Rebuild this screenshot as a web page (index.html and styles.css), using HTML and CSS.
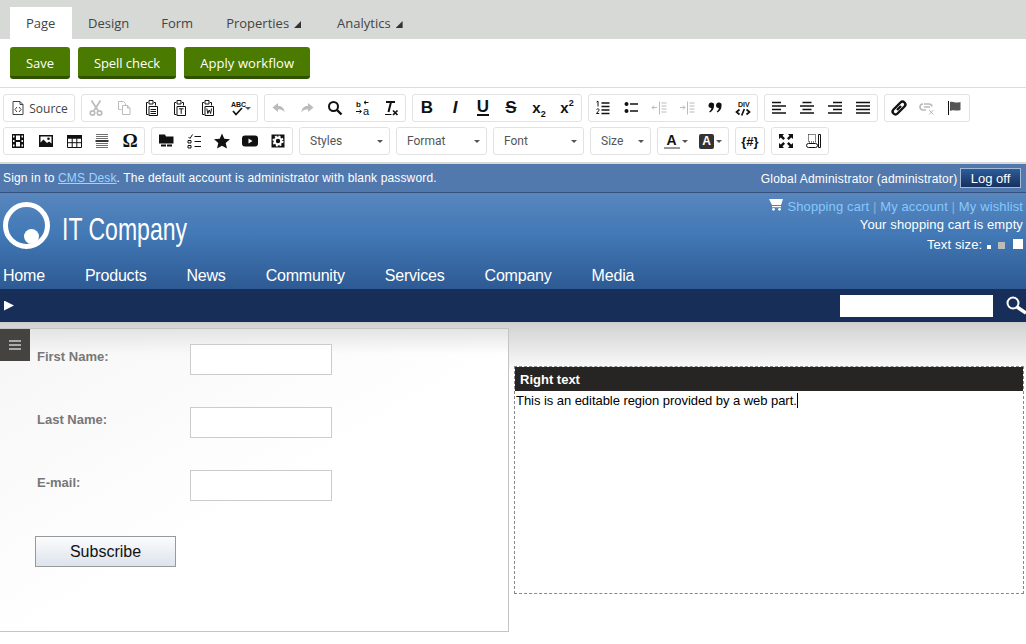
FILE: index.html
```html
<!DOCTYPE html>
<html lang="en">
<head>
    <meta charset="UTF-8">
    <meta name="viewport" content="width=device-width, initial-scale=1.0">
    <title>Page - IT Company</title>
    <link rel="stylesheet" href="styles.css">
</head>
<body>
    <nav class="tabs">
        <a class="tab active">Page</a>
        <a class="tab">Design</a>
        <a class="tab">Form</a>
        <a class="tab more">Properties<i class="corner"></i></a>
        <a class="tab more">Analytics<i class="corner"></i></a>
    </nav>
    <div class="actions">
        <button class="green">Save</button>
        <button class="green">Spell check</button>
        <button class="green apply">Apply workflow</button>
    </div>

    <div class="editor-bar">
        <div class="toolrow">
            <div class="group">
                <span class="tool source">
                    <svg class="ic" viewBox="0 0 16 16"><path class="ln" d="M3 1.500h7l3 3v10H3zM10 1.500v3h3M7 7L5 9.500 7 12M9 7l2 2.500L9 12"/></svg>
                    Source
                </span>
            </div>
            <div class="group">
                <span class="tool off"><svg class="ic" viewBox="0 0 16 16"><path class="ln2" d="M3.500 .5l6.500 10M12.500 .5L6 10.500"/><circle class="ln2" cx="4.500" cy="13" r="2.200"/><circle class="ln2" cx="11.500" cy="13" r="2.200"/></svg></span>
                <span class="tool off"><svg class="ic" viewBox="0 0 16 16"><path class="ln" d="M2.500 1.500h5l2 2v2M2.500 1.500v8h3M6.500 5.500h5l2.500 2.500v6.500H6.500zM11.500 5.500V8H14"/></svg></span>
                <span class="tool"><svg class="ic" viewBox="0 0 16 16"><path class="ln" d="M4 2.500H2.500v12h2M10 2.500h1.500v3M5 .5h4V4H5zM5 6.500h8.500v9H5z"/><path class="ln" d="M6.500 9.500h5.500M6.500 11.500h5.500M6.500 13.500h5.500"/></svg></span>
                <span class="tool"><svg class="ic" viewBox="0 0 16 16"><path class="ln" d="M4 2.500H2.500v12h2M10 2.500h1.500v3M5 .5h4V4H5zM5 6.500h8.500v9H5z"/><path class="ln" d="M7 8.800h4.500M9.200 8.800v5"/></svg></span>
                <span class="tool"><svg class="ic" viewBox="0 0 16 16"><path class="ln" d="M4 2.500H2.500v12h2M10 2.500h1.500v3M5 .5h4V4H5zM5 6.500h8.500v9H5z"/><path class="ln" d="M6.800 8.500l1 5 1.400-3.500 1.400 3.500 1-5"/></svg></span>
                <span class="tool wide"><svg class="ic" viewBox="0 0 16 16"><text class="mini small" x="2" y="7">ABC</text><path class="ln2" d="M4 11l3 3.500 6-6.500"/></svg><i class="caret"></i></span>
            </div>
            <div class="group">
                <span class="tool off"><svg class="ic" viewBox="0 0 16 16"><path class="solid" d="M7 3L1.500 7.500 7 12V9.300c3 0 5 .8 6.500 3 0-3.800-2.500-6.300-6.500-6.500z"/></svg></span>
                <span class="tool off"><svg class="ic" viewBox="0 0 16 16"><path class="solid" d="M9 3l5.500 4.500L9 12V9.300c-3 0-5 .8-6.500 3 0-3.800 2.500-6.300 6.500-6.500z"/></svg></span>
                <span class="tool"><svg class="ic" viewBox="0 0 16 16"><circle class="ln3" cx="6.500" cy="6.500" r="4.500"/><path class="ln4" d="M10 10l4.500 4.500"/></svg></span>
                <span class="tool"><svg class="ic" viewBox="0 0 16 16"><text class="mini" x="1" y="7">b</text><text class="mini big" x="8" y="15">a</text><path class="ln" d="M9 2.500h4.500M11 .8L9 2.500l2 1.700M1 11.500h5M4.500 9.800l2 1.700-2 1.700"/></svg></span>
                <span class="tool"><svg class="ic" viewBox="0 0 16 16"><path class="ln3" d="M3 2h9M8 2L5.500 12"/><path class="ln" d="M2 14.500h6.500"/><path class="ln2" d="M10 10.500l4.500 4.500M14.500 10.500L10 15"/></svg></span>
            </div>
            <div class="group">
                <span class="tool glyph"><b>B</b></span>
                <span class="tool glyph"><b><em>I</em></b></span>
                <span class="tool glyph"><b class="under">U</b></span>
                <span class="tool glyph"><b class="strike">S</b></span>
                <span class="tool glyph"><span class="script"><b>x</b><sub>2</sub></span></span>
                <span class="tool glyph"><span class="script"><b>x</b><sup>2</sup></span></span>
            </div>
            <div class="group">
                <span class="tool"><svg class="ic" viewBox="0 0 16 16"><path class="ln2" d="M6.500 3h8M6.500 6.500h8M6.500 10h8M6.500 13.500h8"/><path class="ln" d="M1.500 2l1.500-.8V6.500M1.500 9.500c1-1.200 3-.7 2.500.8L1.500 13.500H4.200"/></svg></span>
                <span class="tool"><svg class="ic" viewBox="0 0 16 16"><circle class="solid" cx="3.500" cy="4" r="2"/><circle class="solid" cx="3.500" cy="11" r="2"/><path class="ln2" d="M7 4h8M7 11h8"/></svg></span>
                <span class="tool off"><svg class="ic" viewBox="0 0 16 16"><path class="ln" d="M8.500 1.500v13M10.500 3h5M10.500 6h5M10.500 9h5M10.500 12h5M1 7.500h5M3 5.500l-2 2 2 2"/></svg></span>
                <span class="tool off"><svg class="ic" viewBox="0 0 16 16"><path class="ln" d="M8.500 1.500v13M10.500 3h5M10.500 6h5M10.500 9h5M10.500 12h5M1 7.500h5M4 5.500l2 2-2 2"/></svg></span>
                <span class="tool"><svg class="ic" viewBox="0 0 16 16"><path class="solid" d="M1.500 5a2.800 2.800 0 1 1 5.500 1c0 3-1.500 5-4 6.500l-.8-1c1.300-.9 2-1.900 2.200-3.500A2.800 2.800 0 0 1 1.500 5zM9 5a2.800 2.800 0 1 1 5.500 1c0 3-1.500 5-4 6.500l-.8-1c1.300-.9 2-1.900 2.200-3.500A2.800 2.800 0 0 1 9 5z"/></svg></span>
                <span class="tool"><svg class="ic" viewBox="0 0 16 16"><text class="mini small" x="3" y="7">DIV</text><path class="ln2" d="M4.500 9.500L1.500 12l3 2.500M11.500 9.500l3 2.500-3 2.500M9.300 9l-2.600 6.500"/></svg></span>
            </div>
            <div class="group">
                <span class="tool"><svg class="ic" viewBox="0 0 16 16"><path class="ln2" d="M1 2.500h9M1 6h14M1 9.500h9M1 13h14"/></svg></span>
                <span class="tool"><svg class="ic" viewBox="0 0 16 16"><path class="ln2" d="M3.500 2.500h9M1 6h14M3.500 9.500h9M1 13h14"/></svg></span>
                <span class="tool"><svg class="ic" viewBox="0 0 16 16"><path class="ln2" d="M6 2.500h9M1 6h14M6 9.500h9M1 13h14"/></svg></span>
                <span class="tool"><svg class="ic" viewBox="0 0 16 16"><path class="ln2" d="M1 2.500h14M1 6h14M1 9.500h14M1 13h14"/></svg></span>
            </div>
            <div class="group">
                <span class="tool"><svg class="ic" viewBox="0 0 16 16"><path class="ln4" d="M6.500 5.500L2.500 9.500a2.800 2.800 0 0 0 4 4L9.500 10.500M9.500 10.500L13.500 6.500a2.800 2.800 0 0 0-4-4L6.500 5.500M6 10l4-4"/></svg></span>
                <span class="tool off"><svg class="ic" viewBox="0 0 16 16"><path class="ln2" d="M5 4h5a3 3 0 0 1 3 2.500M7 10H4a3 3 0 0 1 0-6M5 7h6"/><path class="ln" d="M10 10l4.500 4.500M14.500 10L10 14.500"/></svg></span>
                <span class="tool"><svg class="ic" viewBox="0 0 16 16"><path class="ln" d="M1.500 1v14"/><path class="flag" d="M3 2c3-1 5 1 8 .5l2.500-.5v8c-3 1-5 .2-7 .2-1.500 0-2.500 .3-3.500 .8z"/></svg></span>
            </div>
        </div>

        <div class="toolrow">
            <div class="group">
                <span class="tool"><svg class="ic" viewBox="0 0 16 16"><path class="solid" fill-rule="evenodd" d="M2 1h12v14H2zM3 2.500v2h1.500v-2zM3 7v2h1.500V7zM3 11.500v2h1.500v-2zM11.500 2.500v2H13v-2zM11.500 7v2H13V7zM11.500 11.500v2H13v-2zM6 2.500v4.500h4V2.500zM6 9v4.500h4V9z"/></svg></span>
                <span class="tool"><svg class="ic" viewBox="0 0 16 16"><path class="solid" fill-rule="evenodd" d="M1 2h14v12H1zM2.500 3.500v6l3-3 3.500 3.500 2-1.500 2.500 2V3.500z"/><circle class="solid" cx="10.500" cy="5.800" r="1.300"/></svg></span>
                <span class="tool"><svg class="ic" viewBox="0 0 16 16"><path class="solid" d="M1 2h15v3.500H1z"/><path class="ln" d="M1.500 5h14v9.500h-14zM1.500 9.700h14M6.200 5v9.500M10.800 5v9.500"/></svg></span>
                <span class="tool"><svg class="ic" viewBox="0 0 16 16"><path class="ln soft" d="M2 1.500h12M2 3.500h12M2 5.500h12M2 10.500h12M2 12.500h12M2 14.500h12"/><path class="ln2" d="M1.500 8h13"/></svg></span>
                <span class="tool glyph omega">Ω</span>
            </div>
            <div class="group">
                <span class="tool"><svg class="ic" viewBox="0 0 16 16"><path class="solid" d="M1 1.500h6l1 2h7.500v7H1zM3 11.500h5v2H3zM9 11.500h5v2H9z"/></svg></span>
                <span class="tool"><svg class="ic" viewBox="0 0 16 16"><path class="ln" d="M2.500 4l1.500 1.500 2.500-4M8.500 3.500h6.500M8.500 8.500h6.500M8.500 13.500h6.500M2 7.500h3V10H2zM2 12.500h3V15H2z"/></svg></span>
                <span class="tool"><svg class="ic" viewBox="0 0 16 16"><path class="solid" d="M8 .5l2.300 5.200 5.700.5-4.300 3.800 1.300 5.500L8 12.700 3 15.500l1.300-5.500L0 6.200l5.700-.5z"/></svg></span>
                <span class="tool"><svg class="ic" viewBox="0 0 16 16"><path class="solid" fill-rule="evenodd" d="M3 2.500h10a3 3 0 0 1 3 3v5a3 3 0 0 1-3 3H3a3 3 0 0 1-3-3v-5a3 3 0 0 1 3-3zM6.500 5.500v5l4-2.500z"/></svg></span>
                <span class="tool"><svg class="ic" viewBox="0 0 16 16"><path class="solid" d="M1.500 1.500h13v13h-13z"/><circle class="cog" cx="8" cy="8" r="3.300"/><circle class="teeth" cx="8" cy="8" r="4.700"/></svg></span>
            </div>
            <div class="group combo w91">Styles<i class="caret"></i></div>
            <div class="group combo w91">Format<i class="caret"></i></div>
            <div class="group combo w91">Font<i class="caret"></i></div>
            <div class="group combo w61">Size<i class="caret"></i></div>
            <div class="group">
                <span class="tool half"><b class="colour">A</b><i class="caret"></i></span>
                <span class="tool half"><b class="colour filled">A</b><i class="caret"></i></span>
            </div>
            <div class="group">
                <span class="tool glyph macro"><b>{#}</b></span>
            </div>
            <div class="group">
                <span class="tool"><svg class="ic" viewBox="0 0 16 16"><path class="solid" d="M1 1h5L4.500 2.800 7 5.300 5.300 7 2.800 4.500 1 6zM15 1v5l-1.800-1.500L10.700 7 9 5.300l2.500-2.500L10 1zM1 15v-5l1.800 1.500L5.300 9 7 10.700l-2.500 2.500L6 15zM15 15h-5l1.500-1.800L9 10.700 10.700 9l2.500 2.500L15 10z"/></svg></span>
                <span class="tool"><svg class="ic" viewBox="0 0 16 16"><path class="ln dots" d="M2.500 1.500h7v7.500h-7z"/><path class="ln" d="M2.500 10.500h7a1.500 1.500 0 0 1 0 4h-7a1.500 1.500 0 0 1 0-4zM12.500 1.500h2v13h-2z"/></svg></span>
            </div>
        </div>
    </div>

    <div class="signin">
        <span>Sign in to <a>CMS Desk</a>. The default account is administrator with blank password.</span>
        <span class="user">Global Administrator (administrator) <button class="logoff">Log off</button></span>
    </div>

    <header class="site">
        <div class="site-top">
            <div class="logo">
                <svg class="logo-mark" viewBox="0 0 48 48">
                    <circle cx="23.500" cy="23.500" r="21" fill="none" stroke="#fff" stroke-width="5"/>
                    <circle cx="28.500" cy="34.500" r="7.500" fill="#fff"/>
                </svg>
                <span class="logo-text">IT Company</span>
            </div>
            <div class="site-links">
                <div class="links">
                    <svg class="cart" viewBox="0 0 14 12"><path fill="#fff" d="M0 0h14l-2 6H3zM3 7h9v1.200H3z"/><circle fill="#fff" cx="4.500" cy="10.300" r="1.400"/><circle fill="#fff" cx="10.500" cy="10.300" r="1.400"/></svg>
                    <a>Shopping cart</a> <s>|</s> <a>My account</a> <s>|</s> <a>My wishlist</a>
                </div>
                <div>Your shopping cart is empty</div>
                <div class="textsize">Text size: <i class="sq s1"></i><i class="sq s2"></i><i class="sq s3"></i></div>
            </div>
        </div>
        <ul class="menu">
            <li>Home</li>
            <li>Products</li>
            <li>News</li>
            <li>Community</li>
            <li>Services</li>
            <li>Company</li>
            <li>Media</li>
        </ul>
    </header>

    <div class="searchbar">
        <i class="play"></i>
        <input class="search" type="text">
        <svg class="lens" viewBox="0 0 22 20"><circle cx="8" cy="7" r="5.500" fill="none" stroke="#fff" stroke-width="2"/><path d="M12 11l9 6" stroke="#fff" stroke-width="3.500"/></svg>
    </div>

    <main class="content">
        <section class="left-zone">
            <span class="zone-handle"><svg viewBox="0 0 12 10"><path d="M0 1h12M0 5h12M0 9h12" stroke="#aaa" stroke-width="2"/></svg></span>
            <form class="subscribe">
                <label>First Name:</label><input type="text">
                <label>Last Name:</label><input type="text">
                <label>E-mail:</label><input type="text">
            </form>
            <button class="subscribe-btn">Subscribe</button>
        </section>
        <section class="right-zone">
            <h3>Right text</h3>
            <p>This is an editable region provided by a web part.<span class="cursor"></span></p>
        </section>
    </main>
</body>
</html>
```
FILE: styles.css
```css
* {
    box-sizing: border-box;
}
body {
    margin: 0;
    padding: 0;
    background: #fff;
    color: #000;
    font-family: "Liberation Sans", Arial, sans-serif;
    overflow: hidden;
}
button {
    font-family: inherit;
    cursor: pointer;
}

/* tabs and actions */
.tabs {
    display: flex;
    height: 39px;
    padding: 7px 0 0 10px;
    background: #d7d9d6;
    font-family: "Open Sans", sans-serif;
    font-size: 13px;
    color: #444;
}
.tab {
    padding: 0 16px;
    line-height: 32px;
}
.tab.active {
    width: 62px;
    background: #fff;
}
.tab.more {
    margin-left: 1px;
    padding-right: 22px;
}
.tab.more + .tab.more {
    margin-left: 0;
    padding-left: 14px;
}
.corner {
    display: inline-block;
    width: 7px;
    height: 7px;
    margin-left: 5px;
    background: #333;
    clip-path: polygon(100% 0, 100% 100%, 0 100%);
}
.actions {
    display: flex;
    gap: 8px;
    height: 49px;
    padding: 8px 10px 0;
    border-bottom: 1px solid #ddd;
}
.green {
    height: 32px;
    padding: 2px 16px 0;
    border: 0;
    border-bottom: 3px solid #2e5200;
    border-radius: 3px;
    background: #4a7a00;
    color: #fff;
    font-family: "Open Sans", sans-serif;
    font-size: 13px;
    letter-spacing: -0.06px;
}
.green.apply {
    letter-spacing: 0.08px;
}

/* editor toolbar */
.editor-bar {
    height: 74px;
    padding: 6px 0 0 3px;
}
.toolrow {
    display: flex;
    gap: 6px;
    height: 28px;
    margin-bottom: 5px;
}
.group {
    display: flex;
    border: 1px solid #e2e2e2;
    border-radius: 3px;
}
.tool {
    display: flex;
    align-items: center;
    justify-content: center;
    width: 28px;
    color: #111;
}
.tool.off {
    color: #bbb;
}
.tool.wide {
    width: 35px;
}
.tool.half {
    width: 35px;
    gap: 2px;
}
.tool.source {
    width: 70px;
    gap: 3px;
    font-family: "Open Sans", sans-serif;
    font-size: 12px;
    color: #444;
}
.ic {
    width: 16px;
    height: 16px;
    flex: none;
    overflow: visible;
}
.ln, .ln2, .ln3, .ln4 {
    fill: none;
    stroke: currentColor;
    stroke-width: 1;
}
.ln2 {
    stroke-width: 1.700;
}
.ln3 {
    stroke-width: 2;
}
.ln4 {
    stroke-width: 2.400;
}
.soft {
    opacity: 0.6;
}
.dots {
    stroke-dasharray: 1 1;
}
.solid {
    fill: currentColor;
}
.flag {
    fill: #555;
}
.cog {
    fill: none;
    stroke: #fff;
    stroke-width: 2.200;
}
.teeth {
    fill: none;
    stroke: #fff;
    stroke-width: 1.800;
    stroke-dasharray: 1.900 1.790;
}
.mini {
    font-family: "Liberation Sans", sans-serif;
    font-size: 8px;
    font-weight: bold;
    fill: currentColor;
}
.mini.big {
    font-size: 11px;
    font-weight: normal;
}
.mini.small {
    font-size: 7px;
}
.glyph {
    font-family: "Liberation Sans", sans-serif;
    font-size: 17px;
}
.under {
    border-bottom: 2px solid #111;
    line-height: 14px;
}
.strike {
    text-decoration: line-through;
}
.script {
    display: block;
    line-height: 16px;
}
.script b {
    font-size: 15px;
}
.script sub, .script sup {
    font-size: 9px;
    font-weight: bold;
    line-height: 0;
}
.omega {
    font-family: "Liberation Serif", serif;
    font-size: 19px;
    font-weight: bold;
}
.macro {
    font-size: 13px;
}
.combo {
    align-items: center;
    justify-content: space-between;
    padding: 0 6px 0 10px;
    font-family: "Roboto", sans-serif;
    font-size: 12px;
    color: #555;
}
.w91 {
    width: 91px;
}
.w61 {
    width: 61px;
}
.caret {
    display: inline-block;
    width: 0;
    height: 0;
    border-left: 3px solid transparent;
    border-right: 3px solid transparent;
    border-top: 3px solid #555;
}
.colour {
    width: 16px;
    border-bottom: 2px solid #999;
    font-size: 14px;
    line-height: 14px;
    text-align: center;
}
.colour.filled {
    width: 15px;
    border: 0;
    border-radius: 2px;
    background: #333;
    color: #fff;
    font-size: 12px;
    line-height: 15px;
}

/* site header */
.signin {
    display: flex;
    align-items: center;
    justify-content: space-between;
    height: 31px;
    padding: 0 5px 0 3px;
    border-top: 2px solid #d9d9d9;
    border-bottom: 1px solid #33527f;
    background: #5179ae;
    color: #fff;
    font-size: 12px;
    letter-spacing: 0.15px;
}
.signin .user {
    letter-spacing: 0.22px;
}
.signin a {
    color: #9fd4ff;
    text-decoration: underline;
}
.logoff {
    width: 61px;
    height: 20px;
    margin-left: -1px;
    padding: 0;
    border: 1px solid #a5bad6;
    background: linear-gradient(#2b5d9a, #16305f);
    color: #fff;
    font-size: 13px;
}
.site {
    height: 96px;
    background: linear-gradient(#5886bd 0%, #4279b6 42%, #2e5a93 100%);
    color: #fff;
}
.site-top {
    display: flex;
    justify-content: space-between;
    height: 73px;
    padding: 0 3px;
}
.logo {
    display: flex;
    align-items: flex-start;
    gap: 11px;
    padding-top: 9px;
}
.logo-mark {
    width: 48px;
    height: 48px;
}
.logo-text {
    margin-top: 7px;
    font-size: 32px;
    line-height: 40px;
    transform: scaleX(0.72);
    transform-origin: left;
}
.site-links {
    padding-top: 4px;
    font-size: 13px;
    letter-spacing: 0.12px;
    line-height: 19px;
    text-align: right;
}
.links {
    margin-bottom: -1px;
}
.links a {
    color: #85c8ff;
}
.links s {
    color: #8fb0d4;
    text-decoration: none;
}
.cart {
    width: 14px;
    height: 12px;
    margin-right: 1px;
}
.textsize {
    margin-top: 1px;
}
.sq {
    display: inline-block;
    margin-left: 1px;
    background: #fff;
}
.s1 {
    width: 4px;
    height: 4px;
}
.s2 {
    width: 7px;
    height: 7px;
    margin-left: 7px;
    background: #bbb;
}
.s3 {
    width: 10px;
    height: 10px;
    margin-left: 8px;
}
.menu {
    display: flex;
    gap: 40px;
    margin: 0;
    padding: 0 3px;
    list-style: none;
    font-size: 16px;
    letter-spacing: -0.2px;
    line-height: 20px;
}
.searchbar {
    display: flex;
    align-items: center;
    height: 33px;
    padding-left: 4px;
    background: #172e58;
}
.play {
    width: 10px;
    height: 10px;
    background: #fff;
    clip-path: polygon(0 0, 100% 50%, 0 100%);
}
.search {
    width: 153px;
    height: 22px;
    margin-left: auto;
    border: 0;
    background: #fff;
}
.lens {
    width: 22px;
    height: 20px;
    margin: 0 -1px 0 12px;
    flex: none;
}

/* page content */
.content {
    display: flex;
    align-items: flex-start;
    height: 322px;
    background: linear-gradient(#d2d2d2 0, #fff 52px);
    padding-top: 5px;
    border-top: 1px solid #ccc;
}
.left-zone {
    position: relative;
    width: 509px;
    height: 304px;
    padding: 15px 0 0 35px;
    border: 1px solid #c4c4c4;
    border-left: 0;
    background: linear-gradient(#e4e4e4, rgba(255, 255, 255, 0) 25px), linear-gradient(150deg, #f6f6f6, #fff 55%);
}
.zone-handle {
    position: absolute;
    top: 0;
    left: 0;
    display: flex;
    align-items: center;
    justify-content: center;
    width: 30px;
    height: 32px;
    background: #444340;
}
.zone-handle svg {
    width: 12px;
    height: 10px;
}
.subscribe {
    display: grid;
    grid-template-columns: 155px 142px;
    grid-auto-rows: 31px;
    row-gap: 32px;
}
.subscribe label {
    padding: 5px 0 0 2px;
    font-size: 13px;
    font-weight: bold;
    color: #777;
}
.subscribe input {
    border: 1px solid #ccc;
    background: #fff;
}
.subscribe-btn {
    display: block;
    width: 141px;
    height: 31px;
    margin-top: 35px;
    border: 1px solid #999;
    background: linear-gradient(#fbfcfd, #dde3ec);
    color: #111;
    font-size: 16px;
}
.right-zone {
    width: 510px;
    height: 228px;
    margin: 38px 0 0 5px;
    border: 1px dashed #888;
    background: #fff;
    font-size: 13px;
}
.right-zone h3 {
    height: 24px;
    margin: 0;
    padding: 2px 0 0 5px;
    background: #262524;
    color: #fff;
    font-size: 13px;
    line-height: 22px;
}
.right-zone p {
    margin: 2px 0 0;
    padding-left: 1px;
    letter-spacing: -0.05px;
    line-height: 16px;
}
.cursor {
    display: inline-block;
    width: 1px;
    height: 15px;
    background: #000;
    vertical-align: -3px;
}
```
